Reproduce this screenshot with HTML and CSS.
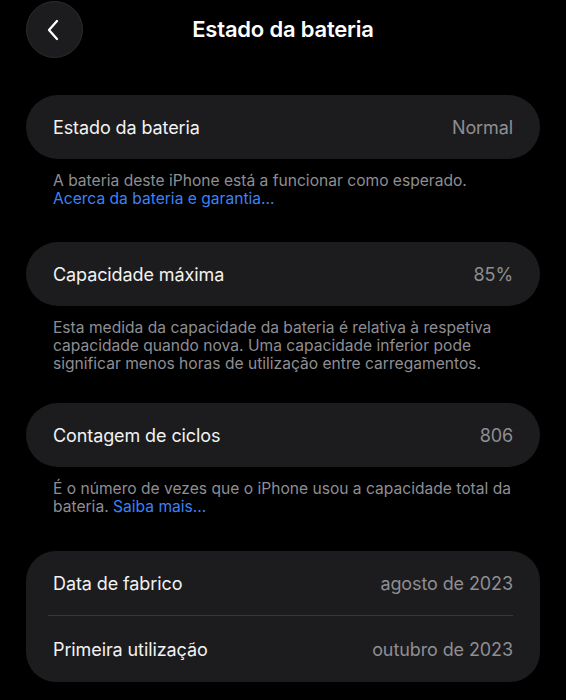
FILE: index.html
```html
<!DOCTYPE html>
<html lang="pt">
<head>
<meta charset="utf-8">
<link rel="stylesheet" href="styles.css">
</head>
<body>
<div class="screen">
  <header class="nav">
    <button class="back" aria-label="Voltar">
      <svg width="14" height="22" viewBox="0 0 14 22"><path d="M11 2 L3 11 L11 20" fill="none" stroke="#fff" stroke-width="2.3" stroke-linecap="round" stroke-linejoin="round"/></svg>
    </button>
    <h1 class="title">Estado da bateria</h1>
  </header>

  <section class="group g1">
    <div class="card pill">
      <div class="row"><span class="label">Estado da bateria</span><span class="value">Normal</span></div>
    </div>
    <p class="foot">A bateria deste iPhone está a funcionar como esperado.<br><a class="link">Acerca da bateria e garantia…</a></p>
  </section>

  <section class="group g2">
    <div class="card pill">
      <div class="row"><span class="label">Capacidade máxima</span><span class="value">85%</span></div>
    </div>
    <p class="foot">Esta medida da capacidade da bateria é relativa à respetiva<br>capacidade quando nova. Uma capacidade inferior pode<br>significar menos horas de utilização entre carregamentos.</p>
  </section>

  <section class="group g3">
    <div class="card pill">
      <div class="row"><span class="label">Contagem de ciclos</span><span class="value">806</span></div>
    </div>
    <p class="foot">É o número de vezes que o iPhone usou a capacidade total da<br>bateria. <a class="link">Saiba mais…</a></p>
  </section>

  <section class="group g4">
    <div class="card list">
      <div class="row r1"><span class="label">Data de fabrico</span><span class="value">agosto de 2023</span></div>
      <div class="divider"></div>
      <div class="row r2"><span class="label">Primeira utilização</span><span class="value">outubro de 2023</span></div>
    </div>
  </section>
</div>
</body>
</html>
```
FILE: styles.css
```css
* { box-sizing: border-box; }
html, body { margin: 0; padding: 0; background: #000; }
body {
  font-family: Inter, "Noto Sans", "Liberation Sans", sans-serif;
  color: #fff;
  width: 566px;
  height: 700px;
  overflow: hidden;
}
.screen { padding: 0 26px; }
.nav {
  height: 58px;
  display: flex;
  align-items: center;
  position: relative;
}
.back {
  width: 57px;
  height: 57px;
  border-radius: 50%;
  background: #1c1c1e;
  border: 1px solid #2c2c2e;
  display: flex;
  align-items: center;
  justify-content: center;
  padding: 0 3px 0 0;
  margin-top: 1px;
}
.title {
  position: absolute;
  left: 0;
  right: 0;
  top: 0;
  height: 58px;
  margin: 0;
  display: flex;
  align-items: center;
  justify-content: center;
  font-size: 22px;
  font-weight: 600;
  letter-spacing: -0.2px;
  pointer-events: none;
}
.group { margin: 0; }
.g1 { margin-top: 37px; }
.g2 { margin-top: 34px; }
.g3 { margin-top: 30px; }
.g4 { margin-top: 35px; }
.card {
  background: #1c1c1e;
  width: 514px;
}
.pill { border-radius: 32px; height: 64px; display: flex; align-items: center; }
.list { border-radius: 30px; }
.row {
  display: flex;
  justify-content: space-between;
  align-items: center;
  width: 100%;
  padding: 0 27px;
  font-size: 18px;
  letter-spacing: -0.1px;
}
.list .r1 { height: 64px; }
.list .r2 { height: 66px; }
.label { color: #f2f2f2; }
.value { color: #8e8e93; }
.divider {
  height: 1px;
  background: #38383a;
  margin: 0 27px 0 22px;
}
.foot {
  margin: 13px 0 0 0;
  padding-left: 27px;
  font-size: 15.6px;
  line-height: 18px;
  color: #8e8e93;
}
.link { color: #3c82f6; }
```
